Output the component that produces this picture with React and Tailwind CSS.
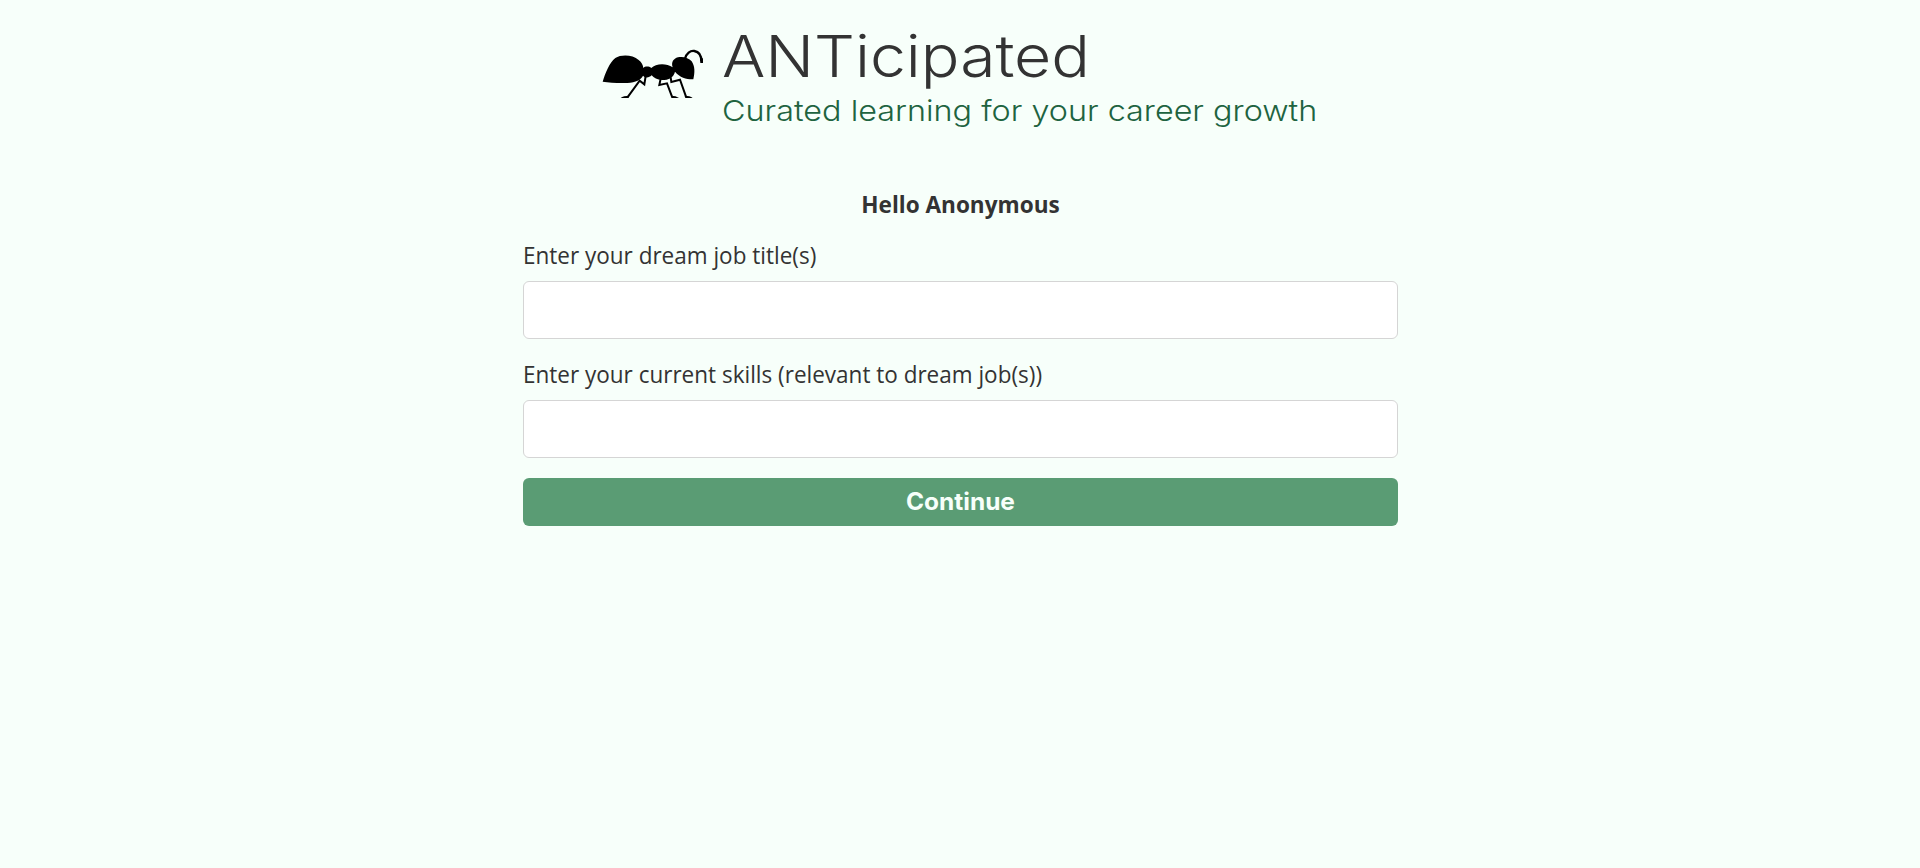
import React, { useState } from "react";

const AntLogo = () => (
    <svg viewBox="36 54 306 150" className="mt-12 h-[50px] w-[102px] shrink-0" aria-hidden="true">
        {/* Body */}
        <path d="M38 155 C46 130 58 98 76 84 C94 73 128 74 146 90 C155 97 159 105 160 114 C165 109 176 108 184 114 C196 101 228 98 248 112 C243 97 250 86 264 82 C278 78 296 83 305 94 C315 109 315 127 310 148 C292 149 270 143 255 125 C251 143 236 150 216 150 C202 150 191 144 185 136 C177 144 166 145 159 137 C153 149 138 157 112 159 C84 160 58 158 38 155 Z" />
        {/* Antenna */}
        <path d="M285 86 C289 70 301 61 313 63 C326 65 334 76 334 94" fill="none" stroke="#000" strokeWidth="7" />
        <path d="M330 85 H339 V99 H331 Z" />
        {/* Legs */}
        <g fill="none" stroke="#000" strokeWidth="6">
            <path d="M167 138 L163 163 L149 152 L114 200" />
            <path d="M212 146 L208 165 L231 160 L246 200" />
            <path d="M242 142 L244 156 L270 149 L288 200" />
        </g>
        <path d="M92 204 Q100 197 118 197 L116 204 Z" />
        <path d="M243 197 Q258 197 267 204 L244 204 Z" />
        <path d="M284 197 Q300 197 308 204 L286 204 Z" />
    </svg>
);

const Field = ({ label, value, onChange }) => (
    <label className="flex flex-col items-start gap-2.5">
        <span className="h-[33px] origin-left scale-x-[0.9375] text-2xl leading-[33px] whitespace-nowrap">{label}</span>
        <input
            type="text"
            value={value}
            onChange={(e) => onChange(e.target.value)}
            className="h-[58px] w-full rounded-md border border-[#d5d5d5] bg-white px-4 outline-none"
        />
    </label>
);

const App = () => {
    const [jobs, setJobs] = useState("");
    const [skills, setSkills] = useState("");

    return (
        <div className="min-h-screen bg-[#f7fffa] font-['Open_Sans',sans-serif] text-[#333]">
            <header className="mx-auto flex h-[185px] w-[716px] gap-[18px]">
                <AntLogo />
                <div className="flex flex-col items-start pt-5 font-['Inter',sans-serif] whitespace-nowrap">
                    <h1 className="h-[73px] origin-left scale-x-[1.108] text-[58px] leading-[72px] font-[360]">
                        ANTicipated
                    </h1>
                    <p className="h-9 origin-left scale-x-[1.115] text-[29px] leading-9 font-[330] text-[#20633f]">
                        Curated learning for your career growth
                    </p>
                </div>
            </header>

            <main className="mx-auto w-[875px]">
                <h2 className="mb-4 scale-x-[0.94] text-center text-2xl leading-[37px] font-bold">Hello Anonymous</h2>
                <form className="flex flex-col" onSubmit={(e) => e.preventDefault()}>
                    <div className="mb-5 flex flex-col gap-[18px]">
                        <Field label="Enter your dream job title(s)" value={jobs} onChange={setJobs} />
                        <Field label="Enter your current skills (relevant to dream job(s))" value={skills} onChange={setSkills} />
                    </div>
                    <button
                        type="submit"
                        className="h-12 rounded-md bg-[#5a9c74] font-['Inter',sans-serif] text-2xl font-bold text-[#f7fffa]"
                    >
                        <span className="inline-block scale-x-[1.02]">Continue</span>
                    </button>
                </form>
            </main>
        </div>
    );
};

export default App;
